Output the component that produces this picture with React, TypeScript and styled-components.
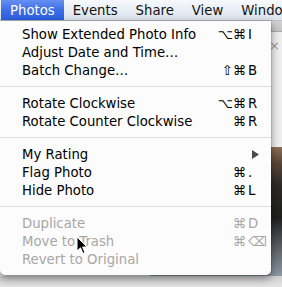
import React from 'react'
import styled, { createGlobalStyle } from 'styled-components'

const GlobalStyle = createGlobalStyle`
    html, body {
        margin: 0;
        padding: 0;
        background: #dcdcdc;
    }
    body {
        font-family: "DejaVu Sans", "Liberation Sans", sans-serif;
        -webkit-font-smoothing: antialiased;
    }
`;

const Screen = styled.div`
    position: relative;
    width: 282px;
    height: 287px;
    overflow: hidden;
    display: flex;
    flex-direction: column;
`;

const MenuBar = styled.div`
    display: flex;
    align-items: stretch;
    height: 21px;
    padding-left: 1px;
    background: linear-gradient(#f7f9fc, #e6ecf3 60%, #dde4ec);
    border-bottom: 1px solid #b9c0c9;
    box-sizing: border-box;
    overflow: hidden;
`;

const MenuTitle = styled.div<{ $active?: boolean }>`
    display: flex;
    align-items: center;
    padding: 0 9px;
    font-size: 13.25px;
    color: ${p => (p.$active ? '#fff' : '#111')};
    background: ${p => (p.$active ? 'linear-gradient(#6690f2, #3e6de6 50%, #2d5fe0)' : 'transparent')};
    white-space: nowrap;
`;

const Desktop = styled.div`
    flex: 1;
    display: flex;
    flex-direction: column;
`;

const WindowBar = styled.div`
    height: 10px;
    background: linear-gradient(#d2d2d2, #c4c4c4);
    border-bottom: 1px solid #a9a9a9;
`;

const WindowBody = styled.div`
    flex: 1;
    display: flex;
`;

const Sidebar = styled.div`
    width: 150px;
    background: #e8e8e8;
`;

const PhotoArea = styled.div`
    flex: 1;
    display: flex;
    flex-direction: column;
`;

const InfoPanel = styled.div`
    height: 115px;
    background: #eeeeee;
    display: flex;
    justify-content: flex-end;
    padding: 6px 2px 0 0;
    box-sizing: border-box;
    font-size: 13px;
    color: #9a9a9a;
`;

const Photo = styled.div`
    flex: 1;
    background: linear-gradient(#8c6e55 0%, #5a4737 12%, #2b2a28 30%, #1f1f1f 55%, #55585c 75%, #8d98a3 100%);
`;

const Footer = styled.div`
    height: 11px;
    background: linear-gradient(#cfcfcf, #e4e4e4);
`;

const Menu = styled.div`
    position: absolute;
    top: 21px;
    left: 0;
    width: 271px;
    padding: 4px 0 7px;
    box-sizing: border-box;
    background: #fcfcfc;
    border-radius: 0 0 5px 5px;
    box-shadow: 0 3px 9px rgba(0, 0, 0, 0.45), 0 0 0 1px rgba(0, 0, 0, 0.08);
    font-size: 13.25px;
`;

const Item = styled.div<{ $disabled?: boolean }>`
    display: flex;
    align-items: center;
    height: 18px;
    padding: 0 8px 0 22px;
    color: ${p => (p.$disabled ? '#a7a7a7' : '#000')};
    white-space: nowrap;
`;

const Label = styled.span`
    flex: 1;
`;

const Mods = styled.span`
    width: 30px;
    text-align: right;
`;

const Key = styled.span`
    width: 15px;
    padding-left: 2px;
`;

const Separator = styled.div`
    height: 15px;
    display: flex;
    align-items: center;
    &::after {
        content: '';
        flex: 1;
        height: 1px;
        background: #dedede;
    }
`;

const Arrow = styled.svg`
    margin-right: 4px;
`;

const Cursor = styled.svg`
    position: absolute;
    left: 76px;
    top: 236px;
`;

type Entry =
    | { sep: true }
    | { label: string; mods?: string; key?: string; disabled?: boolean; sub?: boolean };

const entries: Entry[] = [
    { label: 'Show Extended Photo Info', mods: '⌥⌘', key: 'I' },
    { label: 'Adjust Date and Time…' },
    { label: 'Batch Change…', mods: '⇧⌘', key: 'B' },
    { sep: true },
    { label: 'Rotate Clockwise', mods: '⌥⌘', key: 'R' },
    { label: 'Rotate Counter Clockwise', mods: '⌘', key: 'R' },
    { sep: true },
    { label: 'My Rating', sub: true },
    { label: 'Flag Photo', mods: '⌘', key: '.' },
    { label: 'Hide Photo', mods: '⌘', key: 'L' },
    { sep: true },
    { label: 'Duplicate', mods: '⌘', key: 'D', disabled: true },
    { label: 'Move to Trash', mods: '⌘', key: '⌫', disabled: true },
    { label: 'Revert to Original', disabled: true },
];

export default function App() {
    return (
        <>
            <GlobalStyle />
            <Screen>
                <MenuBar>
                    <MenuTitle $active>Photos</MenuTitle>
                    <MenuTitle>Events</MenuTitle>
                    <MenuTitle>Share</MenuTitle>
                    <MenuTitle>View</MenuTitle>
                    <MenuTitle>Window</MenuTitle>
                </MenuBar>
                <Desktop>
                    <WindowBar />
                    <WindowBody>
                        <Sidebar />
                        <PhotoArea>
                            <InfoPanel>×</InfoPanel>
                            <Photo />
                        </PhotoArea>
                    </WindowBody>
                    <Footer />
                </Desktop>

                <Menu>
                    {entries.map((e, i) =>
                        'sep' in e ? (
                            <Separator key={i} />
                        ) : (
                            <Item key={i} $disabled={e.disabled}>
                                <Label>{e.label}</Label>
                                {e.sub ? (
                                    <Arrow width="7" height="9" viewBox="0 0 7 9">
                                        <polygon points="0,0 7,4.5 0,9" fill="#4a4a4a" />
                                    </Arrow>
                                ) : (
                                    <>
                                        <Mods>{e.mods}</Mods>
                                        <Key>{e.key}</Key>
                                    </>
                                )}
                            </Item>
                        )
                    )}
                </Menu>

                <Cursor width="12" height="19" viewBox="0 0 12 19">
                    <path d="M1 1 L1 15 L4.5 11.8 L7 17.5 L9 16.6 L6.6 11 L11 11 Z" fill="#000" stroke="#fff" strokeWidth="1" strokeLinejoin="round" />
                </Cursor>
            </Screen>
        </>
    );
}
